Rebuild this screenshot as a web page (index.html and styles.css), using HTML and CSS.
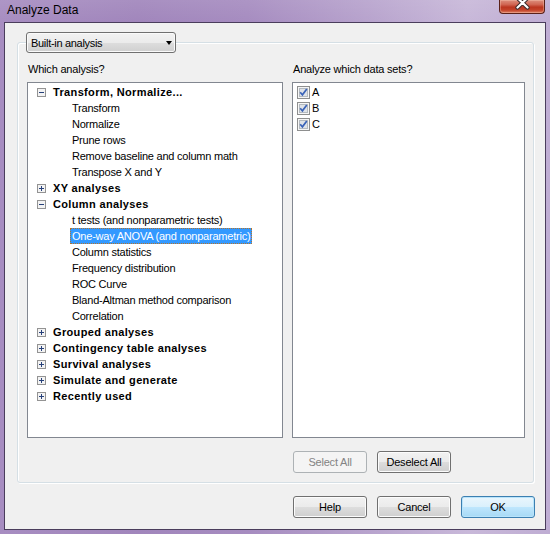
FILE: index.html
```html
<!DOCTYPE html>
<html>
<head>
<meta charset="utf-8">
<title>Analyze Data</title>
<link rel="stylesheet" href="styles.css">
</head>
<body>
<div class="window">
  <div class="titlebar">
    <span class="title">Analyze Data</span>
    <span class="close">
      <svg width="46" height="14" viewBox="0 0 46 14">
        <path d="M18.5 -2 L28.5 7.5 M28.5 -2 L18.5 7.5" stroke="#3a2a2a" stroke-width="4.2" stroke-linecap="round" fill="none"/>
        <path d="M18.5 -2 L28.5 7.5 M28.5 -2 L18.5 7.5" stroke="#ffffff" stroke-width="2.2" stroke-linecap="round" fill="none"/>
      </svg>
    </span>
  </div>
  <div class="client">
    <div class="group">
      <div class="combo"><span>Built-in analysis</span><span class="arrow"></span></div>
      <div class="cols">
        <div class="col">
          <div class="label">Which analysis?</div>
          <ul class="tree">
            <li class="node"><svg class="exp" width="9" height="9" viewBox="0 0 9 9"><rect x="0.5" y="0.5" width="8" height="8" fill="#f3f3f3" stroke="#939393"/><path d="M2 4.5 H7" stroke="#26407a" stroke-width="1"/></svg><span class="hdr">Transform, Normalize...</span></li>
            <li class="leaf"><span>Transform</span></li>
            <li class="leaf"><span>Normalize</span></li>
            <li class="leaf"><span>Prune rows</span></li>
            <li class="leaf"><span>Remove baseline and column math</span></li>
            <li class="leaf"><span>Transpose X and Y</span></li>
            <li class="node"><svg class="exp" width="9" height="9" viewBox="0 0 9 9"><rect x="0.5" y="0.5" width="8" height="8" fill="#f3f3f3" stroke="#939393"/><path d="M2 4.5 H7 M4.5 2 V7" stroke="#26407a" stroke-width="1"/></svg><span class="hdr">XY analyses</span></li>
            <li class="node"><svg class="exp" width="9" height="9" viewBox="0 0 9 9"><rect x="0.5" y="0.5" width="8" height="8" fill="#f3f3f3" stroke="#939393"/><path d="M2 4.5 H7" stroke="#26407a" stroke-width="1"/></svg><span class="hdr">Column analyses</span></li>
            <li class="leaf"><span>t tests (and nonparametric tests)</span></li>
            <li class="leaf"><span class="selected">One-way ANOVA (and nonparametric)</span></li>
            <li class="leaf"><span>Column statistics</span></li>
            <li class="leaf"><span>Frequency distribution</span></li>
            <li class="leaf"><span>ROC Curve</span></li>
            <li class="leaf"><span>Bland-Altman method comparison</span></li>
            <li class="leaf"><span>Correlation</span></li>
            <li class="node"><svg class="exp" width="9" height="9" viewBox="0 0 9 9"><rect x="0.5" y="0.5" width="8" height="8" fill="#f3f3f3" stroke="#939393"/><path d="M2 4.5 H7 M4.5 2 V7" stroke="#26407a" stroke-width="1"/></svg><span class="hdr">Grouped analyses</span></li>
            <li class="node"><svg class="exp" width="9" height="9" viewBox="0 0 9 9"><rect x="0.5" y="0.5" width="8" height="8" fill="#f3f3f3" stroke="#939393"/><path d="M2 4.5 H7 M4.5 2 V7" stroke="#26407a" stroke-width="1"/></svg><span class="hdr">Contingency table analyses</span></li>
            <li class="node"><svg class="exp" width="9" height="9" viewBox="0 0 9 9"><rect x="0.5" y="0.5" width="8" height="8" fill="#f3f3f3" stroke="#939393"/><path d="M2 4.5 H7 M4.5 2 V7" stroke="#26407a" stroke-width="1"/></svg><span class="hdr">Survival analyses</span></li>
            <li class="node"><svg class="exp" width="9" height="9" viewBox="0 0 9 9"><rect x="0.5" y="0.5" width="8" height="8" fill="#f3f3f3" stroke="#939393"/><path d="M2 4.5 H7 M4.5 2 V7" stroke="#26407a" stroke-width="1"/></svg><span class="hdr">Simulate and generate</span></li>
            <li class="node"><svg class="exp" width="9" height="9" viewBox="0 0 9 9"><rect x="0.5" y="0.5" width="8" height="8" fill="#f3f3f3" stroke="#939393"/><path d="M2 4.5 H7 M4.5 2 V7" stroke="#26407a" stroke-width="1"/></svg><span class="hdr">Recently used</span></li>
          </ul>
        </div>
        <div class="col">
          <div class="label">Analyze which data sets?</div>
          <ul class="list">
            <li class="item"><svg class="chk" width="13" height="13" viewBox="0 0 13 13"><rect x="0.5" y="0.5" width="12" height="12" fill="#f6f6f6" stroke="#8e8f8f"/><rect x="2.5" y="2.5" width="8" height="8" fill="#dfe3e8" stroke="#b4bac0"/><path d="M3.2 6.3 L5.4 8.8 L9.8 3" stroke="#3a63b8" stroke-width="1.7" fill="none"/></svg><span>A</span></li>
            <li class="item"><svg class="chk" width="13" height="13" viewBox="0 0 13 13"><rect x="0.5" y="0.5" width="12" height="12" fill="#f6f6f6" stroke="#8e8f8f"/><rect x="2.5" y="2.5" width="8" height="8" fill="#dfe3e8" stroke="#b4bac0"/><path d="M3.2 6.3 L5.4 8.8 L9.8 3" stroke="#3a63b8" stroke-width="1.7" fill="none"/></svg><span>B</span></li>
            <li class="item"><svg class="chk" width="13" height="13" viewBox="0 0 13 13"><rect x="0.5" y="0.5" width="12" height="12" fill="#f6f6f6" stroke="#8e8f8f"/><rect x="2.5" y="2.5" width="8" height="8" fill="#dfe3e8" stroke="#b4bac0"/><path d="M3.2 6.3 L5.4 8.8 L9.8 3" stroke="#3a63b8" stroke-width="1.7" fill="none"/></svg><span>C</span></li>
          </ul>
          <div class="btnrow">
            <button class="btn" disabled>Select All</button>
            <button class="btn">Deselect All</button>
          </div>
        </div>
      </div>
    </div>
    <div class="footer">
      <button class="btn">Help</button>
      <button class="btn">Cancel</button>
      <button class="btn default">OK</button>
    </div>
  </div>
</div>
</body>
</html>
```
FILE: styles.css
```css
* { box-sizing: border-box; }
html, body { margin: 0; padding: 0; }
body {
  width: 550px;
  height: 534px;
  overflow: hidden;
  font-family: "Liberation Sans", Arial, sans-serif;
  font-size: 11px;
  color: #000;
}
.window {
  width: 550px;
  height: 534px;
  display: flex;
  flex-direction: column;
  background:
    linear-gradient(180deg, rgba(255,255,255,0.08) 0%, rgba(255,255,255,0) 22px),
    linear-gradient(90deg, #a78dc1 0%, #a186bc 25%, #a68cc0 45%, #b6a1cc 65%, #c8b8d9 85%, #bfadd3 100%);
}
.titlebar {
  height: 22px;
  display: flex;
  align-items: flex-start;
}
.title {
  padding-left: 7px;
  font-size: 12px;
  line-height: 20px;
  color: #000;
}
.close {
  margin-left: auto;
  margin-right: 5px;
  width: 46px;
  height: 14px;
  border: 1px solid #5a2119;
  border-top: none;
  border-radius: 0 0 4px 4px;
  background: linear-gradient(180deg, #dd8f7e 0%, #d06552 35%, #bb3520 55%, #c4432a 78%, #de8266 100%);
  box-shadow: inset 0 0 0 1px rgba(255,210,190,0.35);
  overflow: hidden;
  display: block;
}
.close svg { display: block; margin-left: -1px; }
.client {
  margin: 0 4px;
  height: 508px;
  border: 1px solid #4a3d5c;
  background: #f0f0f0;
  display: flex;
  flex-direction: column;
}
.group {
  margin: 19px 11px 0 12px;
  height: 441px;
  border: 1px solid #d5dfe5;
  border-radius: 3px;
  box-shadow: inset 1px 1px 0 #fff, 1px 1px 0 #fff;
  padding: 0 8px 9px 9px;
}
.combo {
  margin: -11px 0 0 -1px;
  width: 150px;
  height: 21px;
  border: 1px solid #707070;
  border-radius: 3px;
  background: linear-gradient(180deg, #f2f2f2 0%, #ebebeb 50%, #dddddd 51%, #cfcfcf 100%);
  box-shadow: inset 0 0 0 1px #fafafa;
  display: flex;
  align-items: center;
  justify-content: space-between;
  padding: 1px 3px 0 4px;
  line-height: 18px;
  letter-spacing: -0.3px;
}
.arrow {
  width: 0;
  height: 0;
  border-left: 3.5px solid transparent;
  border-right: 3.5px solid transparent;
  border-top: 4px solid #000;
  margin-top: -1px;
}
.cols {
  display: grid;
  grid-template-columns: 256px 233px;
  column-gap: 9px;
}
.label {
  margin-top: 9px;
  line-height: 14px;
  letter-spacing: -0.2px;
  padding-left: 1px;
}
.tree, .list {
  list-style: none;
  margin: 6px 0 0 0;
  height: 356px;
  border: 1px solid #828790;
  background: #fff;
  padding: 1px 0 0 0;
}
.tree li, .list li {
  height: 16px;
  white-space: nowrap;
}
.node {
  display: flex;
  align-items: center;
  padding-left: 9px;
}
.exp { display: block; flex: none; }
.hdr {
  margin-left: 7px;
  font-weight: bold;
  line-height: 16px;
  letter-spacing: 0.35px;
}
.leaf { padding-left: 42px; }
.leaf span {
  display: inline-block;
  vertical-align: top;
  line-height: 14px;
  padding: 0 1px;
  border: 1px solid transparent;
  letter-spacing: -0.22px;
}
.leaf span.selected {
  background: #3399ff;
  color: #fff;
  border: 1px dotted #b5742c;
}
.item {
  display: flex;
  align-items: center;
  padding-left: 4px;
  line-height: 16px;
}
.chk { display: block; flex: none; margin-right: 2px; }
.btnrow {
  margin-top: 13px;
  padding-left: 1px;
  display: flex;
  gap: 10px;
}
.btn {
  font-family: "Liberation Sans", Arial, sans-serif;
  font-size: 11px;
  letter-spacing: -0.2px;
  width: 74px;
  height: 22px;
  padding: 0;
  margin: 0;
  line-height: 20px;
  color: #000;
  border: 1px solid #707070;
  border-radius: 3px;
  background: linear-gradient(180deg, #f2f2f2 0%, #ebebeb 50%, #dddddd 51%, #cfcfcf 100%);
  box-shadow: inset 0 0 0 1px #fcfcfc;
  text-align: center;
}
.btn:disabled {
  color: #838383;
  border-color: #adb2b5;
  background: #f4f4f4;
  box-shadow: none;
}
.btn.default {
  border-color: #3c7fb1;
  background: linear-gradient(180deg, #eaf6fd 0%, #d9f0fc 50%, #bee6fd 51%, #a7d9f5 100%);
  box-shadow: inset 0 0 0 1px #b9e4fb;
}
.footer {
  margin-top: 13px;
  display: flex;
  justify-content: flex-end;
  gap: 10px;
  padding-right: 10px;
}
```
